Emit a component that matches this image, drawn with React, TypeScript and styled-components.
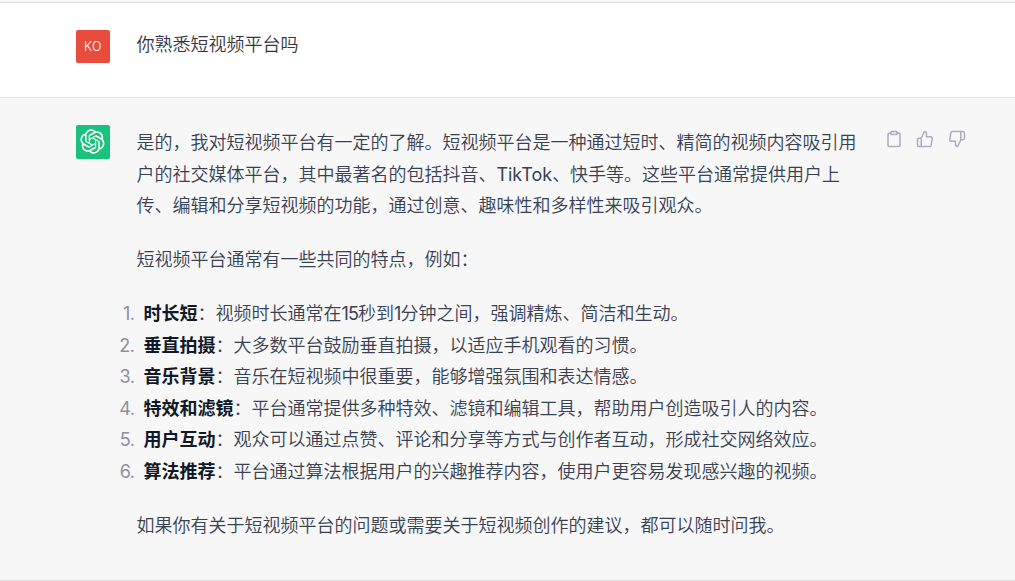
import styled, { createGlobalStyle } from "styled-components";
import { FiClipboard, FiThumbsDown, FiThumbsUp } from "react-icons/fi";

const GlobalStyle = createGlobalStyle`
  * {
    box-sizing: border-box;
  }

  body {
    margin: 0;
    background: #f7f7f8;
    font-family: Inter, "Noto Sans CJK SC", sans-serif;
  }
`;

const Wrapper = styled.main`
  width: 100%;
  height: 581px;
  padding-top: 2px;
  overflow: hidden;
`;

const Message = styled.section<{ $assistant?: boolean }>`
  display: flex;
  align-items: flex-start;
  height: ${({ $assistant }) => ($assistant ? "483px" : "95px")};
  padding: ${({ $assistant }) => ($assistant ? "27px" : "26px")} 0 0 76px;
  border-bottom: 1px solid ${({ $assistant }) => ($assistant ? "#dededf" : "#e2e2e2")};
  background: ${({ $assistant }) => ($assistant ? "#f7f7f8" : "#fff")};
`;

const TopLine = styled.div`
  height: 1px;
  background: #dedede;
`;

const Avatar = styled.div<{ $user?: boolean }>`
  display: flex;
  justify-content: center;
  align-items: center;
  flex-shrink: 0;
  width: 34px;
  height: ${({ $user }) => ($user ? "33px" : "34px")};
  margin-top: ${({ $user }) => ($user ? "1px" : "0")};
  margin-right: 26px;
  padding: ${({ $user }) => ($user ? "0" : "0 1px 1px 0")};
  border-radius: 2px;
  background: ${({ $user }) => ($user ? "#e74c3c" : "#19c37d")};
  font-size: 12.5px;
  font-weight: 350;
  letter-spacing: 0.4px;
  color: #fff;
`;

const Content = styled.div<{ $user?: boolean }>`
  flex-shrink: 0;
  width: 730px;
  padding: ${({ $user }) => ($user ? "0" : "2px")} 0 0 0.4px;
  font-size: 18px;
  font-weight: 350;
  line-height: 31.5px;
  color: ${({ $user }) => ($user ? "#343541" : "#374151")};
`;

const Paragraph = styled.p`
  margin: 0 0 22.5px;
`;

const Line = styled.span`
  display: block;
  white-space: nowrap;
`;

const List = styled.ol`
  margin: 0 0 22.5px -18px;
  padding: 0;
  list-style: none;
`;

const Item = styled.li`
  display: flex;
`;

const Marker = styled.span`
  display: flex;
  justify-content: flex-end;
  width: 16px;
  margin-right: 9px;
  font-weight: 400;
  letter-spacing: -0.5px;
  color: #8e8ea0;
`;

const Latin = styled.span`
  font-weight: 400;
`;

const Digits = styled(Latin)`
  letter-spacing: -0.8px;
`;

const Strong = styled.strong`
  font-weight: 700;
  color: #111827;
`;

const Actions = styled.div`
  display: flex;
  gap: 4.5px;
  margin-left: 14.25px;
`;

const ActionButton = styled.button`
  display: flex;
  padding: 4.5px;
  border: 0;
  background: transparent;
  font-size: 18px;
  color: #acacbe;
`;

const features = [
  {
    title: "时长短",
    text: (
      <>
        ：视频时长通常在<Digits>15</Digits>秒到<Digits>1</Digits>分钟之间，强调精炼、简洁和生动。
      </>
    ),
  },
  { title: "垂直拍摄", text: "：大多数平台鼓励垂直拍摄，以适应手机观看的习惯。" },
  { title: "音乐背景", text: "：音乐在短视频中很重要，能够增强氛围和表达情感。" },
  { title: "特效和滤镜", text: "：平台通常提供多种特效、滤镜和编辑工具，帮助用户创造吸引人的内容。" },
  { title: "用户互动", text: "：观众可以通过点赞、评论和分享等方式与创作者互动，形成社交网络效应。" },
  { title: "算法推荐", text: "：平台通过算法根据用户的兴趣推荐内容，使用户更容易发现感兴趣的视频。" },
];

function Logo() {
  return (
    <svg width="25" height="25" viewBox="0 0 41 41" fill="none">
      <path
        fill="#fff"
        d="M37.5324 16.8707C37.9808 15.5241 38.1363 14.0974 37.9886 12.6859C37.8409 11.2744 37.3934 9.91076 36.676 8.68622C35.6126 6.83404 33.9882 5.3676 32.0373 4.4985C30.0864 3.62941 27.9098 3.40259 25.8215 3.85078C24.8796 2.7893 23.7219 1.94125 22.4257 1.36341C21.1295 0.785575 19.7249 0.491269 18.3058 0.500197C16.1708 0.495044 14.0893 1.16803 12.3614 2.42214C10.6335 3.67624 9.34853 5.44666 8.6917 7.47815C7.30085 7.76286 5.98686 8.3414 4.8377 9.17505C3.68854 10.0087 2.73073 11.0782 2.02839 12.312C0.956464 14.1591 0.498905 16.2988 0.721698 18.4228C0.944492 20.5467 1.83612 22.5449 3.268 24.1293C2.81966 25.4759 2.66413 26.9026 2.81182 28.3141C2.95951 29.7256 3.40701 31.0892 4.12437 32.3138C5.18791 34.1659 6.8123 35.6322 8.76321 36.5013C10.7141 37.3704 12.8907 37.5973 14.9789 37.1492C15.9208 38.2107 17.0786 39.0587 18.3747 39.6366C19.6709 40.2144 21.0755 40.5087 22.4946 40.4998C24.6307 40.5054 26.7133 39.8321 28.4418 38.5772C30.1704 37.3223 31.4556 35.5506 32.1119 33.5179C33.5027 33.2332 34.8167 32.6547 35.9659 31.821C37.115 30.9874 38.0728 29.9178 38.7752 28.684C39.8458 26.8371 40.3023 24.6979 40.0789 22.5748C39.8556 20.4517 38.9639 18.4544 37.5324 16.8707ZM22.4978 37.8849C20.7443 37.8874 19.0459 37.2733 17.6994 36.1501C17.7601 36.117 17.8666 36.0586 17.936 36.0161L25.9004 31.4156C26.1003 31.3019 26.2663 31.137 26.3813 30.9378C26.4964 30.7386 26.5563 30.5124 26.5549 30.2825V19.0542L29.9213 20.998C29.9389 21.0068 29.9541 21.0198 29.9656 21.0359C29.977 21.052 29.9842 21.0707 29.9867 21.0902V30.3889C29.9842 32.375 29.1946 34.2791 27.7909 35.6841C26.3872 37.0892 24.4838 37.8806 22.4978 37.8849ZM6.39227 31.0064C5.51397 29.4888 5.19742 27.7107 5.49804 25.9832C5.55718 26.0187 5.66048 26.0818 5.73461 26.1244L13.699 30.7248C13.8975 30.8408 14.1233 30.902 14.3532 30.902C14.583 30.902 14.8088 30.8408 15.0073 30.7248L24.731 25.1103V28.9979C24.7321 29.0177 24.7283 29.0376 24.7199 29.0556C24.7115 29.0736 24.6988 29.0893 24.6829 29.1012L16.6317 33.7497C14.9096 34.7416 12.8643 35.0097 10.9447 34.4954C9.02506 33.9811 7.38785 32.7263 6.39227 31.0064ZM4.29707 13.6194C5.17156 12.0998 6.55279 10.9364 8.19885 10.3327C8.19885 10.4013 8.19491 10.5228 8.19491 10.6071V19.808C8.19351 20.0378 8.25334 20.2638 8.36823 20.4629C8.48312 20.6619 8.64893 20.8267 8.84863 20.9404L18.5723 26.5542L15.206 28.4979C15.1894 28.5089 15.1703 28.5155 15.1505 28.5173C15.1307 28.5191 15.1107 28.516 15.0924 28.5082L7.04046 23.8557C5.32135 22.8601 4.06716 21.2235 3.55289 19.3046C3.03862 17.3858 3.30624 15.3413 4.29707 13.6194ZM31.955 20.0556L22.2312 14.4411L25.5976 12.4981C25.6142 12.4872 25.6333 12.4805 25.6531 12.4787C25.6729 12.4769 25.6928 12.4801 25.7111 12.4879L33.7631 17.1364C34.9967 17.849 36.0017 18.8982 36.6606 20.1613C37.3194 21.4244 37.6047 22.849 37.4832 24.2684C37.3617 25.6878 36.8382 27.0432 35.9743 28.1759C35.1103 29.3086 33.9415 30.1717 32.6047 30.6641C32.6047 30.5947 32.6047 30.4733 32.6047 30.3889V21.188C32.6066 20.9586 32.5474 20.7328 32.4332 20.5338C32.319 20.3348 32.154 20.1698 31.955 20.0556ZM35.3055 15.0128C35.2464 14.9765 35.1431 14.9142 35.069 14.8717L27.1045 10.2712C26.906 10.1554 26.6803 10.0943 26.4504 10.0943C26.2206 10.0943 25.9948 10.1554 25.7963 10.2712L16.0726 15.8858V11.9982C16.0715 11.9783 16.0753 11.9585 16.0837 11.9405C16.0921 11.9225 16.1048 11.9068 16.1207 11.8949L24.1719 7.25025C25.4053 6.53903 26.8158 6.19376 28.2383 6.25482C29.6608 6.31589 31.0364 6.78077 32.2044 7.59508C33.3723 8.40939 34.2842 9.53945 34.8334 10.8531C35.3826 12.1667 35.5464 13.6095 35.3055 15.0128ZM14.2424 21.9419L10.8752 19.9981C10.8576 19.9893 10.8423 19.9763 10.8309 19.9602C10.8195 19.9441 10.8122 19.9254 10.8098 19.9058V10.6071C10.8107 9.18295 11.2173 7.78848 11.9819 6.58696C12.7466 5.38544 13.8377 4.42659 15.1275 3.82264C16.4173 3.21869 17.8524 2.99464 19.2649 3.1767C20.6775 3.35876 22.0089 3.93941 23.1034 4.85067C23.0427 4.88379 22.937 4.94215 22.8668 4.98473L14.9024 9.58517C14.7025 9.69878 14.5366 9.86356 14.4215 10.0626C14.3065 10.2616 14.2466 10.4877 14.2479 10.7175L14.2424 21.9419ZM16.071 17.9991L20.4018 15.4978L24.7325 17.9975V22.9985L20.4018 25.4983L16.071 22.9985V17.9991Z"
      />
    </svg>
  );
}

function App() {
  return (
    <Wrapper>
      <GlobalStyle />
      <TopLine />

      <Message>
        <Avatar $user>KO</Avatar>
        <Content $user>你熟悉短视频平台吗</Content>
      </Message>

      <Message $assistant>
        <Avatar>
          <Logo />
        </Avatar>
        <Content>
          <Paragraph>
            <Line>是的，我对短视频平台有一定的了解。短视频平台是一种通过短时、精简的视频内容吸引用</Line>
            <Line>
              户的社交媒体平台，其中最著名的包括抖音、<Latin>TikTok</Latin>、快手等。这些平台通常提供用户上
            </Line>
            <Line>传、编辑和分享短视频的功能，通过创意、趣味性和多样性来吸引观众。</Line>
          </Paragraph>
          <Paragraph>短视频平台通常有一些共同的特点，例如：</Paragraph>
          <List>
            {features.map((feature, index) => (
              <Item key={feature.title}>
                <Marker>{index + 1}.</Marker>
                <span>
                  <Strong>{feature.title}</Strong>
                  {feature.text}
                </span>
              </Item>
            ))}
          </List>
          <Paragraph>
            如果你有关于短视频平台的问题或需要关于短视频创作的建议，都可以随时问我。
          </Paragraph>
        </Content>
        <Actions>
          <ActionButton aria-label="Copy">
            <FiClipboard />
          </ActionButton>
          <ActionButton aria-label="Like">
            <FiThumbsUp />
          </ActionButton>
          <ActionButton aria-label="Dislike">
            <FiThumbsDown />
          </ActionButton>
        </Actions>
      </Message>
    </Wrapper>
  );
}

export default App;
